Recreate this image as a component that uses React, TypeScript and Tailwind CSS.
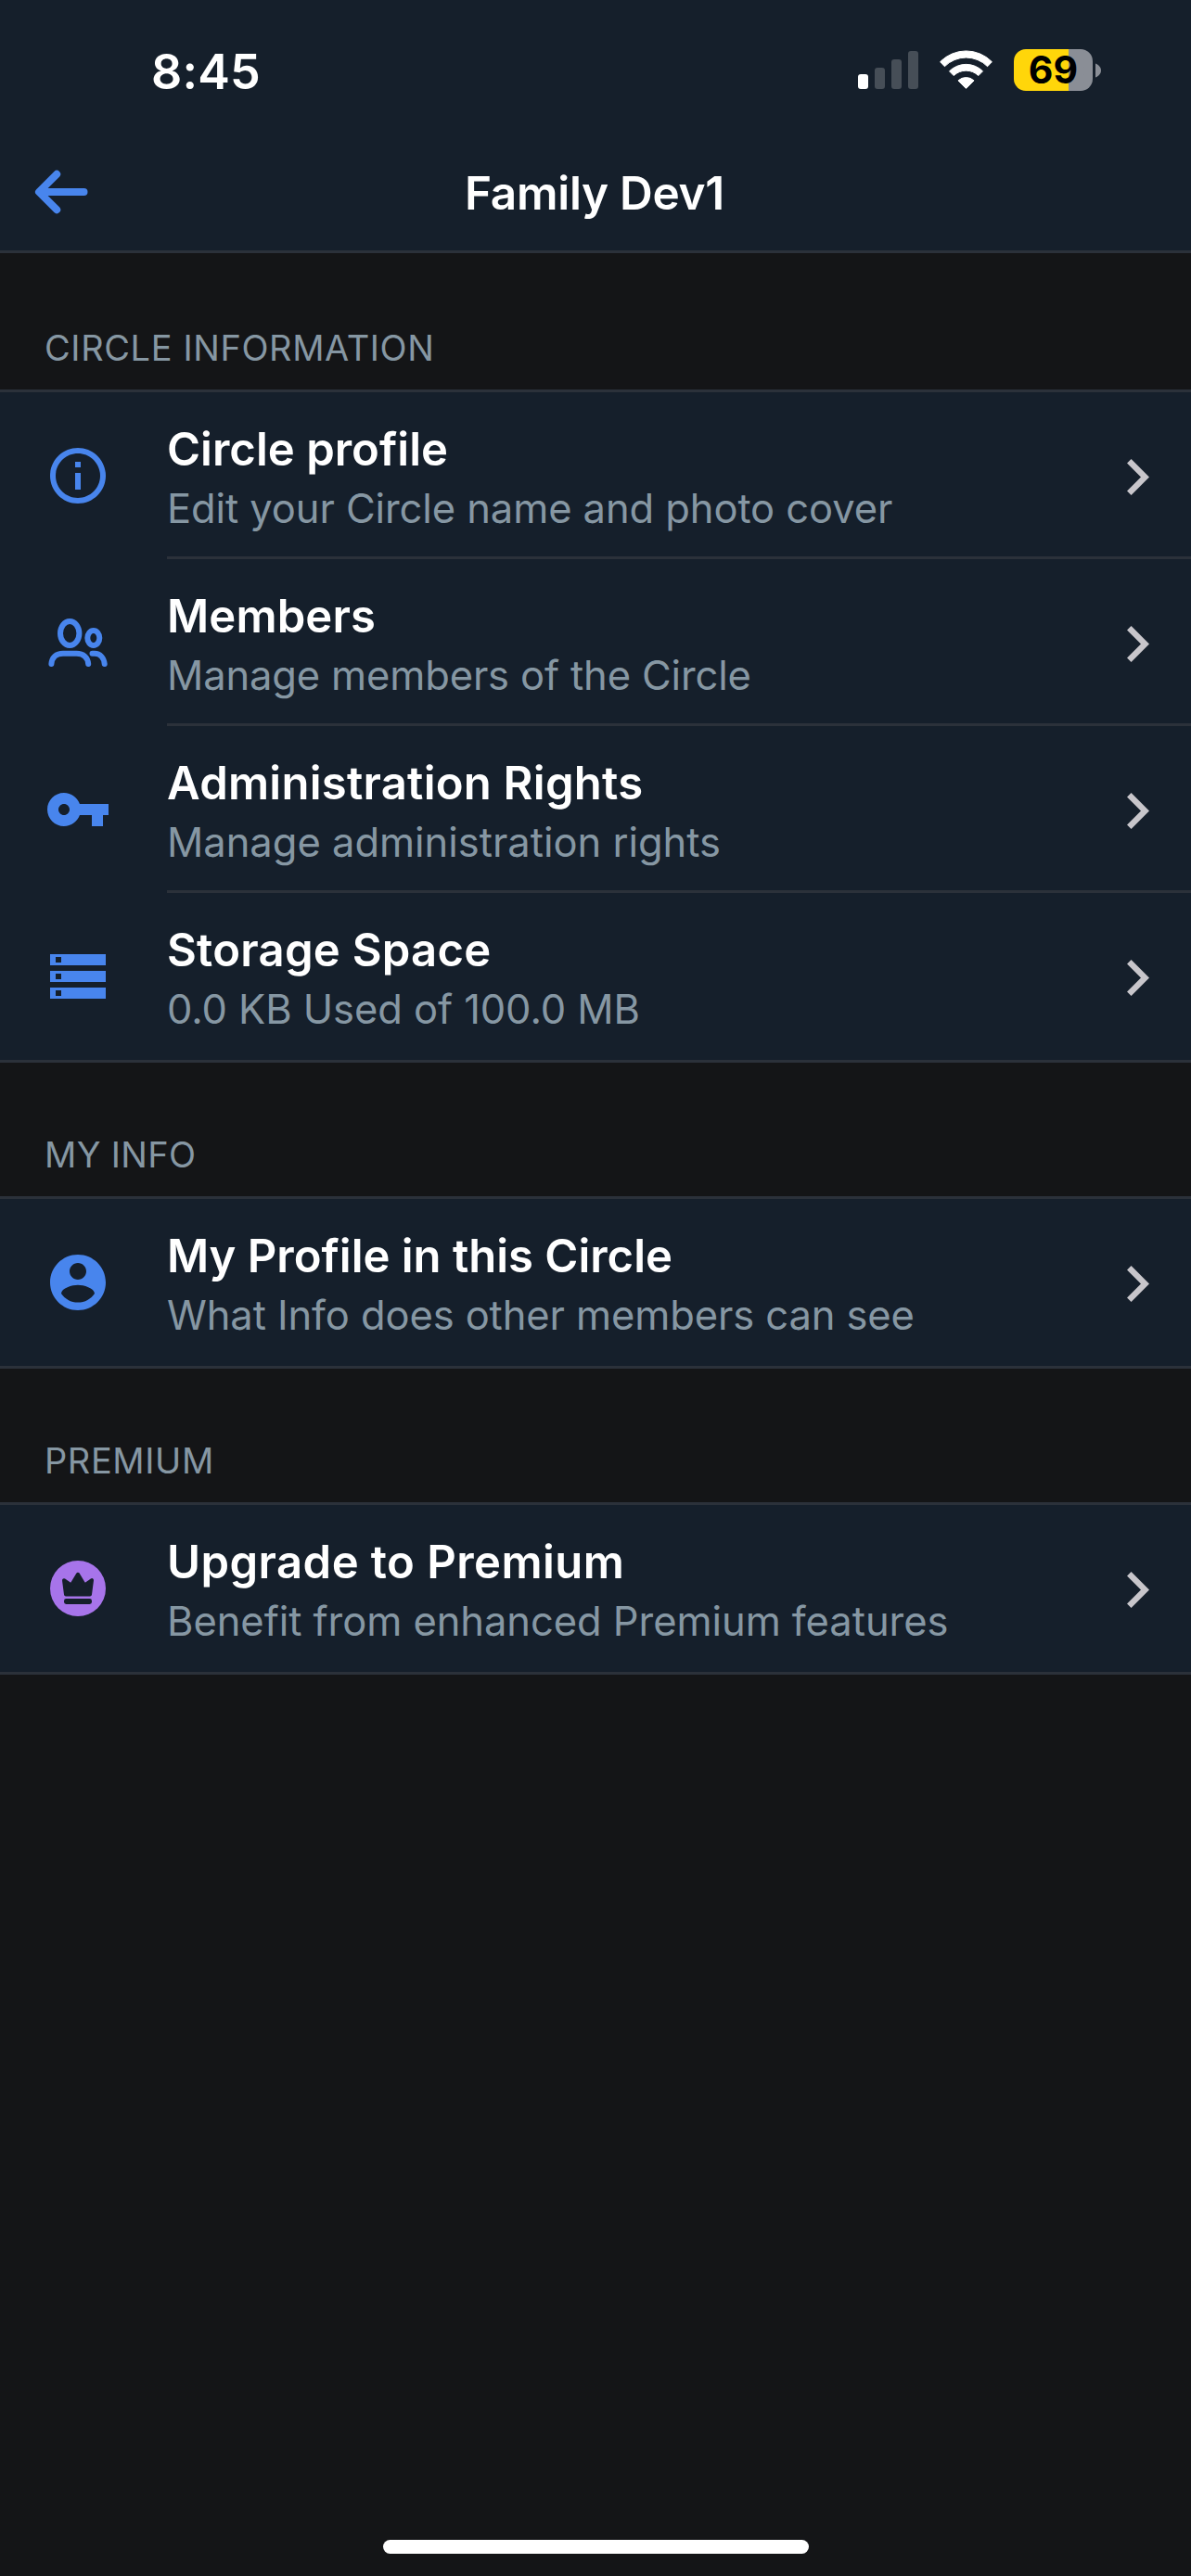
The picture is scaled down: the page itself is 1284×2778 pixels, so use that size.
import type { ReactNode } from "react";

type Item = {
  icon: ReactNode;
  title: string;
  titleClass: string;
  detail: string;
  detailClass: string;
};

type Group = { heading: string; headingClass: string; items: Item[] };

function Glyph({ children }: { children: ReactNode }) {
  return (
    <svg viewBox="0 0 24 24" className="size-[72px]" fill="currentColor">
      {children}
    </svg>
  );
}

function InfoIcon() {
  return (
    <Glyph>
      <path d="M11 7h2v2h-2V7zm0 4h2v6h-2v-6zm1-9C6.48 2 2 6.48 2 12s4.48 10 10 10 10-4.48 10-10S17.52 2 12 2zm0 18c-4.41 0-8-3.59-8-8s3.59-8 8-8 8 3.59 8 8-3.59 8-8 8z" />
    </Glyph>
  );
}

function MembersIcon() {
  return (
    <svg
      viewBox="0 0 72 72"
      className="size-[72px]"
      fill="none"
      stroke="currentColor"
      strokeWidth="6"
      strokeLinecap="round"
    >
      <ellipse cx="27.2" cy="26" rx="10.2" ry="13" />
      <ellipse cx="52.8" cy="31" rx="6.5" ry="8" />
      <path d="M7.4 59C8 52 12.5 47.8 20 47.8H34.5C42 47.8 46.5 52 47.2 59" />
      <path d="M51.5 47.8H54C60 47.8 64 52.5 64.7 59" />
    </svg>
  );
}

function KeyIcon() {
  return (
    <Glyph>
      <path d="M12.65 10C11.83 7.67 9.61 6 7 6c-3.31 0-6 2.69-6 6s2.69 6 6 6c2.61 0 4.83-1.67 5.65-4H17v4h4v-4h2v-4H12.65zM7 14c-1.1 0-2-.9-2-2s.9-2 2-2 2 .9 2 2-.9 2-2 2z" />
    </Glyph>
  );
}

function StorageIcon() {
  return (
    <Glyph>
      <path d="M2 20h20v-4H2v4zm2-3h2v2H4v-2zM2 4v4h20V4H2zm4 3H4V5h2v2zm-4 7h20v-4H2v4zm2-3h2v2H4v-2z" />
    </Glyph>
  );
}

function AccountIcon() {
  return (
    <Glyph>
      <path d="M12 2C6.48 2 2 6.48 2 12s4.48 10 10 10 10-4.48 10-10S17.52 2 12 2zm0 3c1.66 0 3 1.34 3 3s-1.34 3-3 3-3-1.34-3-3 1.34-3 3-3zm0 14.2c-2.5 0-4.71-1.28-6-3.22.03-1.99 4-3.08 6-3.08 1.99 0 5.97 1.09 6 3.08-1.29 1.94-3.5 3.22-6 3.22z" />
    </Glyph>
  );
}

function CrownIcon() {
  return (
    <svg viewBox="0 0 72 72" className="size-[72px] text-[#a774ea]">
      <circle cx="36" cy="36" r="30" fill="currentColor" />
      <path
        d="M21 27.2L28.9 32.6L36 20.8L43.1 32.6L51 27.2L49 42.6H23Z"
        fill="#151f2b"
        stroke="#151f2b"
        strokeWidth="4"
        strokeLinejoin="round"
      />
      <rect x="21" y="47" width="30" height="6" rx="2.4" fill="#151f2b" />
    </svg>
  );
}

const groups: Group[] = [
  {
    heading: "CIRCLE INFORMATION",
    headingClass: "h-[147px] tracking-[0.6px]",
    items: [
      {
        icon: <InfoIcon />,
        title: "Circle profile",
        titleClass: "tracking-[0.02px]",
        detail: "Edit your Circle name and photo cover",
        detailClass: "tracking-[-0.09px]",
      },
      {
        icon: <MembersIcon />,
        title: "Members",
        titleClass: "tracking-[0.12px]",
        detail: "Manage members of the Circle",
        detailClass: "tracking-[-0.15px]",
      },
      {
        icon: <KeyIcon />,
        title: "Administration Rights",
        titleClass: "tracking-[0.25px]",
        detail: "Manage administration rights",
        detailClass: "tracking-[-0.02px]",
      },
      {
        icon: <StorageIcon />,
        title: "Storage Space",
        titleClass: "tracking-[0.25px]",
        detail: "0.0 KB Used of 100.0 MB",
        detailClass: "tracking-[-0.08px]",
      },
    ],
  },
  {
    heading: "MY INFO",
    headingClass: "h-36 tracking-[0.32px]",
    items: [
      {
        icon: <AccountIcon />,
        title: "My Profile in this Circle",
        titleClass: "tracking-[-0.01px]",
        detail: "What Info does other members can see",
        detailClass: "tracking-[-0.11px]",
      },
    ],
  },
  {
    heading: "PREMIUM",
    headingClass: "h-36 tracking-[0.6px]",
    items: [
      {
        icon: <CrownIcon />,
        title: "Upgrade to Premium",
        titleClass: "tracking-[0.44px]",
        detail: "Benefit from enhanced Premium features",
        detailClass: "tracking-[-0.06px]",
      },
    ],
  },
];

function StatusBar() {
  return (
    <div className="flex h-[138px] justify-between pl-[163px] pr-[97px]">
      <span className="pt-[46px] text-[52px] font-semibold leading-[64px] tracking-[0.17px]">
        8:45
      </span>
      <div className="flex pt-[53px]">
        <div className="flex h-[43px] items-end gap-[7px]">
          <div className="h-4 w-[11px] rounded-[3px] bg-white" />
          <div className="h-[23px] w-[11px] rounded-[3px] bg-[#464e57]" />
          <div className="h-8 w-[11px] rounded-[3px] bg-[#464e57]" />
          <div className="h-[41px] w-[11px] rounded-[3px] bg-[#464e57]" />
        </div>
        <svg
          viewBox="0 0 57 42"
          className="ml-[23px] mt-px h-[42px] w-[57px]"
          fill="#fff"
          stroke="#fff"
          strokeWidth="1"
          strokeLinejoin="round"
        >
          <path d="M0.6 12.7A39 39 0 0 1 56.4 12.7L51.6 17.7A32.5 32.5 0 0 0 5.4 17.7Z" />
          <path d="M10.5 22.8A25.5 25.5 0 0 1 46.5 22.8L41.8 27.6A19 19 0 0 0 15.2 27.6Z" />
          <path d="M20 32.9A12.5 12.5 0 0 1 37 32.9L28.5 41.4Z" />
        </svg>
        <div className="ml-[23px] flex h-[45px] items-center gap-[3px]">
          <div className="flex h-[45px] w-[85px] items-center justify-center rounded-[13px] bg-linear-to-r from-[#ffd60a] from-[69.4%] to-[#8a8e96] to-[69.4%] text-[41px] font-bold leading-[45px] tracking-[0.2px] text-black">
            69
          </div>
          <svg viewBox="0 0 6 16" className="h-4 w-1.5" fill="#8a8e96">
            <path d="M0 0.5C3.4 1.8 6 4.6 6 8S3.4 14.2 0 15.5Z" />
          </svg>
        </div>
      </div>
    </div>
  );
}

function NavBar() {
  return (
    <div className="grid h-[132px] grid-cols-[1fr_auto_1fr] items-center">
      <svg
        viewBox="0 0 58 48"
        className="ml-[37px] mt-1.5 h-12 w-[58px] text-[#4885ed]"
        fill="none"
        stroke="currentColor"
        strokeWidth="8"
        strokeLinecap="round"
        strokeLinejoin="round"
      >
        <path d="M24.2 4.8L5 24L24.2 43.2M5.5 24H53.5" />
      </svg>
      <h1 className="mt-2 pr-0.5 text-[49.5px] font-semibold leading-[60px] tracking-[-0.28px]">
        Family Dev1
      </h1>
    </div>
  );
}

function Row({ item, last }: { item: Item; last: boolean }) {
  return (
    <li className="flex h-[180px]">
      <div className="flex w-[180px] shrink-0 items-center pl-12 text-[#4885ed]">
        {item.icon}
      </div>
      <div
        className={
          last
            ? "flex grow justify-between"
            : "flex grow justify-between border-b-[3px] border-[#2b313a]"
        }
      >
        <div className="flex flex-col gap-[5px] whitespace-nowrap pt-8">
          <span className={`text-[49px] font-semibold leading-[60px] ${item.titleClass}`}>
            {item.title}
          </span>
          <span className={`text-[43.5px] leading-[56px] text-[#8697a3] ${item.detailClass}`}>
            {item.detail}
          </span>
        </div>
        <svg
          viewBox="0 0 24 39"
          className="mr-[45px] mt-[72px] h-[39px] w-6 shrink-0"
          fill="none"
          stroke="#c8c6cb"
          strokeWidth="6.4"
        >
          <path d="M2.3 2.3L19.5 19.5L2.3 36.7" />
        </svg>
      </div>
    </li>
  );
}

export default function App() {
  return (
    <div className="flex h-[2778px] w-[1284px] flex-col overflow-hidden bg-[#141517] font-['Inter',sans-serif] text-white">
      <header className="border-b-[3px] border-[#2b313a] bg-[#151f2b]">
        <StatusBar />
        <NavBar />
      </header>
      <main className="grow">
        {groups.map((group) => (
          <section key={group.heading}>
            <h2
              className={`flex items-end pb-[21px] pl-12 text-[38px] leading-[48px] text-[#8697a3] ${group.headingClass}`}
            >
              {group.heading}
            </h2>
            <ul className="border-y-[3px] border-[#2b313a] bg-[#151f2b]">
              {group.items.map((item, i) => (
                <Row key={item.title} item={item} last={i === group.items.length - 1} />
              ))}
            </ul>
          </section>
        ))}
      </main>
      <div className="flex justify-center pb-6">
        <div className="h-[15px] w-[459px] rounded-full bg-white" />
      </div>
    </div>
  );
}
